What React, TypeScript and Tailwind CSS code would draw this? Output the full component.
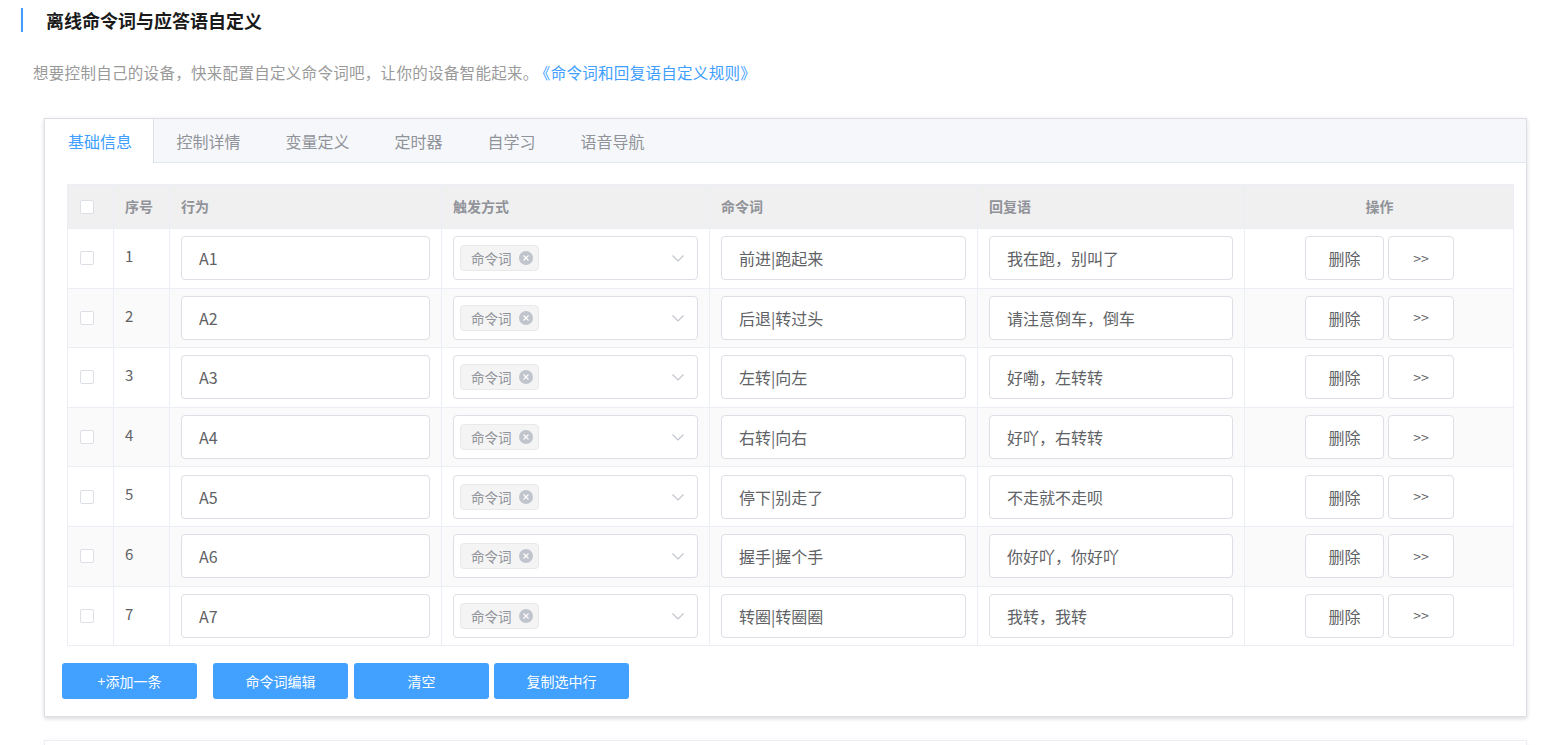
import React from 'react';

const rows = [
  { id: 1, act: 'A1', cmd: '前进|跑起来', reply: '我在跑，别叫了' },
  { id: 2, act: 'A2', cmd: '后退|转过头', reply: '请注意倒车，倒车' },
  { id: 3, act: 'A3', cmd: '左转|向左', reply: '好嘞，左转转' },
  { id: 4, act: 'A4', cmd: '右转|向右', reply: '好吖，右转转' },
  { id: 5, act: 'A5', cmd: '停下|别走了', reply: '不走就不走呗' },
  { id: 6, act: 'A6', cmd: '握手|握个手', reply: '你好吖，你好吖' },
  { id: 7, act: 'A7', cmd: '转圈|转圈圈', reply: '我转，我转' },
];

const tabs = ['基础信息', '控制详情', '变量定义', '定时器', '自学习', '语音导航'];

const cols = 'grid grid-cols-[46px_56px_272px_268px_268px_267px_269px]';

function Checkbox() {
  return <span className="block w-[14px] h-[14px] rounded-[2px] border border-[#dcdfe6] bg-white" />;
}

function TextInput({ value }: { value: string }) {
  return (
    <div className="h-[44px] w-full rounded-[4px] border border-[#dcdfe6] bg-white pl-[17px] flex items-center text-[16px] text-[#606266]">
      {value}
    </div>
  );
}

function TriggerSelect() {
  return (
    <div className="h-[44px] w-full rounded-[4px] border border-[#dcdfe6] bg-white pl-[6px] pr-[12px] flex items-center justify-between">
      <span className="h-[26px] w-[79px] rounded-[4px] border border-[#e9e9eb] bg-[#f4f4f5] pl-[10px] flex items-center gap-[7px] text-[13.5px] text-[#909399]">
        命令词
        <span className="w-[14px] h-[14px] rounded-full bg-[#c0c4cc] flex items-center justify-center">
          <svg width="8" height="8" viewBox="0 0 8 8" fill="none" stroke="#ffffff" strokeWidth="1.1">
            <path d="M1.5 1.5 L6.5 6.5 M6.5 1.5 L1.5 6.5" />
          </svg>
        </span>
      </span>
      <svg width="14" height="14" viewBox="0 0 14 14" fill="none" stroke="#c0c4cc" strokeWidth="1.1">
        <path d="M1.5 4.5 L7 10 L12.5 4.5" />
      </svg>
    </div>
  );
}

export default function App() {
  return (
    <div
      className="min-h-screen bg-white pb-4"
      style={{ fontFamily: '"Noto Sans CJK SC", "Noto Sans", sans-serif' }}
    >
      {/* Title */}
      <div className="pt-[8px] pl-[21px] flex items-center h-[32px]">
        <span className="w-[2px] h-[24px] bg-[#409eff]" />
        <h1 className="ml-[23px] text-[18px] font-bold text-[#1a1a1a] leading-none">离线命令词与应答语自定义</h1>
      </div>

      <p className="mt-[30px] pl-[33px] text-[15.5px] leading-[21px] tracking-[0.3px] text-[#9a9a9a]">
        想要控制自己的设备，快来配置自定义命令词吧，让你的设备智能起来。
        <span className="ml-[4px] text-[#409eff]">《命令词和回复语自定义规则》</span>
      </p>

      {/* Card */}
      <div className="mt-[35px] ml-[44px] w-[1483px] border border-[#dcdfe6] bg-white shadow-[0_2px_4px_0_rgba(0,0,0,0.12),0_0_6px_0_rgba(0,0,0,0.04)]">
        <div className="h-[44px] bg-[#f5f7fa] border-b border-[#e4e7ed] flex">
          {tabs.map((t, i) =>
            i === 0 ? (
              <div
                key={t}
                className="h-[44px] -mb-px bg-white border-r border-[#dcdfe6] pl-[23px] pr-[21px] flex items-center text-[16px] text-[#409eff]"
              >
                {t}
              </div>
            ) : (
              <div key={t} className="h-[43px] px-[22.5px] flex items-center text-[16px] text-[#909399]">
                {t}
              </div>
            )
          )}
        </div>

        <div className="pt-[21px] pb-[17px] pl-[17px]">
          {/* Table */}
          <div className="ml-[5px] w-[1447px] border border-[#ebeef5]">
            <div className={`${cols} h-[43px] bg-[#f0f0f0] text-[14px] font-bold text-[#909399]`}>
              <div className="pl-[12px] flex items-center border-r border-[#ebeef5]">
                <Checkbox />
              </div>
              <div className="pl-[11px] flex items-center border-r border-[#ebeef5]">序号</div>
              <div className="pl-[11px] flex items-center border-r border-[#ebeef5]">行为</div>
              <div className="pl-[11px] flex items-center border-r border-[#ebeef5]">触发方式</div>
              <div className="pl-[11px] flex items-center border-r border-[#ebeef5]">命令词</div>
              <div className="pl-[11px] flex items-center border-r border-[#ebeef5]">回复语</div>
              <div className="flex items-center justify-center">操作</div>
            </div>
            {rows.map((r, i) => (
              <div
                key={r.id}
                className={`${cols} h-[59.6px] border-t border-[#ebeef5] ${i % 2 === 1 ? 'bg-[#fafafa]' : 'bg-white'}`}
              >
                <div className="pl-[12px] flex items-center border-r border-[#ebeef5]">
                  <Checkbox />
                </div>
                <div className="pl-[11px] pb-[4px] flex items-center border-r border-[#ebeef5] text-[15px] text-[#606266]">
                  {r.id}
                </div>
                <div className="px-[11px] flex items-center border-r border-[#ebeef5]">
                  <TextInput value={r.act} />
                </div>
                <div className="px-[11px] flex items-center border-r border-[#ebeef5]">
                  <TriggerSelect />
                </div>
                <div className="px-[11px] flex items-center border-r border-[#ebeef5]">
                  <TextInput value={r.cmd} />
                </div>
                <div className="px-[11px] flex items-center border-r border-[#ebeef5]">
                  <TextInput value={r.reply} />
                </div>
                <div className="flex items-center justify-center gap-[4px]">
                  <button className="h-[44px] w-[79px] rounded-[4px] border border-[#dcdfe6] bg-white text-[16px] text-[#606266]">
                    删除
                  </button>
                  <button className="h-[44px] w-[66px] rounded-[4px] border border-[#dcdfe6] bg-white text-[14px] text-[#606266]">
                    &gt;&gt;
                  </button>
                </div>
              </div>
            ))}
          </div>

          {/* Actions */}
          <div className="mt-[17px] flex">
            <button className="h-[36px] w-[135px] rounded-[3px] bg-[#42a0ff] text-[14px] text-white">+添加一条</button>
            <button className="ml-[16px] h-[36px] w-[135px] rounded-[3px] bg-[#42a0ff] text-[14px] text-white">命令词编辑</button>
            <button className="ml-[6px] h-[36px] w-[135px] rounded-[3px] bg-[#42a0ff] text-[14px] text-white">清空</button>
            <button className="ml-[5px] h-[36px] w-[135px] rounded-[3px] bg-[#42a0ff] text-[14px] text-white">复制选中行</button>
          </div>
        </div>
      </div>

      {/* Next card (partially visible) */}
      <div className="mt-[23px] ml-[44px] w-[1483px] h-[60px] border border-[#ebeef5] bg-white shadow-[0_0_6px_0_rgba(0,0,0,0.04)]" />
    </div>
  );
}
